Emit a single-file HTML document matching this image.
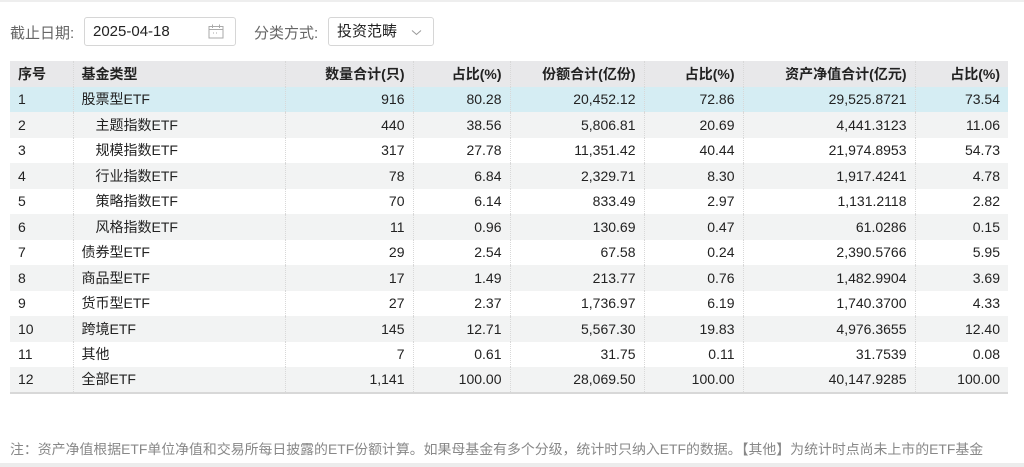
<!DOCTYPE html>
<html><head><meta charset="utf-8"><style>
*{margin:0;padding:0;box-sizing:border-box}
body{width:1024px;height:467px;background:#fff;font-family:"Liberation Sans","Noto Sans CJK SC",sans-serif;color:#222;position:relative;overflow:hidden}
.top{position:absolute;left:0;top:0;width:1024px;height:2px;background:#eee}
.bot{position:absolute;left:0;top:463px;width:1024px;height:4px;background:#ececec}
.lbl{position:absolute;top:22px;font-size:15px;color:#666}
.box{position:absolute;top:17px;height:29px;border:1px solid #d6d6d6;border-radius:3px;font-size:15px;color:#222;line-height:27px;padding-left:8px}
table{position:absolute;left:10px;top:61px;width:998px;border-collapse:collapse;font-size:14px}
td,th{height:25.5px;padding:0 8px;border-left:1px dotted #d8d8d8;white-space:nowrap}
td:first-child,th:first-child{border-left:none}
th{background:#e8e8ea;font-weight:bold;text-align:right}
td{text-align:right}
.l{text-align:left}
tr.h td{background:#d5edf3}
tr.g td{background:#f2f3f3}
tr:last-child td{border-bottom:2px solid #d8d8d8}
.in{padding-left:22px}
.note{position:absolute;left:10px;top:439px;font-size:13.9px;color:#888;white-space:nowrap}
</style></head><body>
<div class="top"></div>
<div class="lbl" style="left:10px">截止日期:</div>
<div class="box" style="left:84px;width:152px">2025-04-18
<svg style="position:absolute;left:123px;top:6px" width="16" height="15" viewBox="0 0 16 15"><rect x="1" y="2.5" width="14" height="11.5" fill="none" stroke="#aaa"/><line x1="1" y1="5.5" x2="15" y2="5.5" stroke="#aaa"/><line x1="4.5" y1="0.5" x2="4.5" y2="4" stroke="#aaa"/><line x1="11.5" y1="0.5" x2="11.5" y2="4" stroke="#aaa"/><line x1="5" y1="9" x2="6" y2="9" stroke="#aaa"/><line x1="8" y1="9" x2="9" y2="9" stroke="#aaa"/></svg></div>
<div class="lbl" style="left:254px">分类方式:</div>
<div class="box" style="left:328px;width:106px">投资范畴
<svg style="position:absolute;left:82px;top:11px" width="11" height="7" viewBox="0 0 11 7"><path d="M1 1.5L5.5 5.5L10 1.5" fill="none" stroke="#999"/></svg></div>
<table>
<colgroup><col style="width:63px"><col style="width:212px"><col style="width:128px"><col style="width:97px"><col style="width:134px"><col style="width:99px"><col style="width:172px"><col style="width:93px"></colgroup>
<tr><th class="l">序号</th><th class="l">基金类型</th><th>数量合计(只)</th><th>占比(%)</th><th>份额合计(亿份)</th><th>占比(%)</th><th>资产净值合计(亿元)</th><th>占比(%)</th></tr>
<tr class="h"><td class="l">1</td><td class="l">股票型ETF</td><td>916</td><td>80.28</td><td>20,452.12</td><td>72.86</td><td>29,525.8721</td><td>73.54</td></tr>
<tr class="g"><td class="l">2</td><td class="l in">主题指数ETF</td><td>440</td><td>38.56</td><td>5,806.81</td><td>20.69</td><td>4,441.3123</td><td>11.06</td></tr>
<tr><td class="l">3</td><td class="l in">规模指数ETF</td><td>317</td><td>27.78</td><td>11,351.42</td><td>40.44</td><td>21,974.8953</td><td>54.73</td></tr>
<tr class="g"><td class="l">4</td><td class="l in">行业指数ETF</td><td>78</td><td>6.84</td><td>2,329.71</td><td>8.30</td><td>1,917.4241</td><td>4.78</td></tr>
<tr><td class="l">5</td><td class="l in">策略指数ETF</td><td>70</td><td>6.14</td><td>833.49</td><td>2.97</td><td>1,131.2118</td><td>2.82</td></tr>
<tr class="g"><td class="l">6</td><td class="l in">风格指数ETF</td><td>11</td><td>0.96</td><td>130.69</td><td>0.47</td><td>61.0286</td><td>0.15</td></tr>
<tr><td class="l">7</td><td class="l">债券型ETF</td><td>29</td><td>2.54</td><td>67.58</td><td>0.24</td><td>2,390.5766</td><td>5.95</td></tr>
<tr class="g"><td class="l">8</td><td class="l">商品型ETF</td><td>17</td><td>1.49</td><td>213.77</td><td>0.76</td><td>1,482.9904</td><td>3.69</td></tr>
<tr><td class="l">9</td><td class="l">货币型ETF</td><td>27</td><td>2.37</td><td>1,736.97</td><td>6.19</td><td>1,740.3700</td><td>4.33</td></tr>
<tr class="g"><td class="l">10</td><td class="l">跨境ETF</td><td>145</td><td>12.71</td><td>5,567.30</td><td>19.83</td><td>4,976.3655</td><td>12.40</td></tr>
<tr><td class="l">11</td><td class="l">其他</td><td>7</td><td>0.61</td><td>31.75</td><td>0.11</td><td>31.7539</td><td>0.08</td></tr>
<tr class="g"><td class="l">12</td><td class="l">全部ETF</td><td>1,141</td><td>100.00</td><td>28,069.50</td><td>100.00</td><td>40,147.9285</td><td>100.00</td></tr>
</table>
<div class="note">注：资产净值根据ETF单位净值和交易所每日披露的ETF份额计算。如果母基金有多个分级，统计时只纳入ETF的数据。【其他】为统计时点尚未上市的ETF基金</div>
<div class="bot"></div>
</body></html>
